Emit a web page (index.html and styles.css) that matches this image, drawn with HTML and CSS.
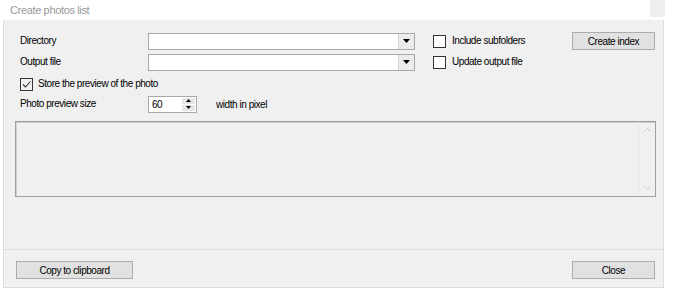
FILE: index.html
```html
<!DOCTYPE html>
<html>
<head>
  <title>Create photos list</title>
  <link rel="stylesheet" href="styles.css">
</head>
<body>
  <div class="titlebar">
    <span class="title">Create photos list</span>
    <span class="sysbox"></span>
  </div>

  <div class="dialog">
    <div class="grid">
      <label class="lbl">Directory</label>
      <div class="combo">
        <span class="combo-text"></span>
        <span class="combo-btn"><svg width="7" height="4" viewBox="0 0 7 4"><path d="M0 0h7L3.5 4z" fill="#000"/></svg></span>
      </div>
      <span></span>
      <label class="check"><span class="box"></span>Include subfolders</label>
      <button class="btn">Create index</button>

      <label class="lbl">Output file</label>
      <div class="combo">
        <span class="combo-text"></span>
        <span class="combo-btn"><svg width="7" height="4" viewBox="0 0 7 4"><path d="M0 0h7L3.5 4z" fill="#000"/></svg></span>
      </div>
      <span></span>
      <label class="check"><span class="box"></span>Update output file</label>
      <span></span>
    </div>

    <label class="check store"><span class="box"><svg width="11" height="11" viewBox="0 0 11 11"><path d="M2 5.5l2.5 2.5L9.5 2.5" fill="none" stroke="#333" stroke-width="1.1"/></svg></span>Store the preview of the photo</label>

    <div class="size-row">
      <span class="lbl">Photo preview size</span>
      <div class="spin">
        <span class="spin-text">60</span>
        <span class="spin-btns">
          <span class="spin-b"><svg width="5" height="3" viewBox="0 0 5 3"><path d="M0 3h5L2.5 0z" fill="#000"/></svg></span>
          <span class="spin-b"><svg width="5" height="3" viewBox="0 0 5 3"><path d="M0 0h5L2.5 3z" fill="#000"/></svg></span>
        </span>
      </div>
      <span class="unit">width in pixel</span>
    </div>

    <div class="output">
      <div class="output-body"></div>
      <div class="vscroll">
        <svg width="7" height="4" viewBox="0 0 7 4"><path d="M0.5 3.5L3.5 0.5L6.5 3.5" fill="none" stroke="#c4c4c4"/></svg>
        <svg width="7" height="4" viewBox="0 0 7 4"><path d="M0.5 0.5L3.5 3.5L6.5 0.5" fill="none" stroke="#c4c4c4"/></svg>
      </div>
    </div>

    <div class="footer">
      <button class="btn wide">Copy to clipboard</button>
      <button class="btn">Close</button>
    </div>
  </div>
</body>
</html>
```

FILE: styles.css
```css
body { margin: 0; background: #fff; font-family: "Liberation Sans", Arial, sans-serif; font-size: 10px; letter-spacing: -0.45px; color: #000; width: 677px; height: 290px; overflow: hidden; }
.titlebar { height: 20px; display: flex; align-items: flex-start; justify-content: space-between; }
.title { font-size: 11px; letter-spacing: -0.35px; color: #999; padding: 3px 0 0 10px; line-height: 14px; }
.sysbox { width: 15px; height: 17px; background: #eeeeee; margin-right: 12px; }

.dialog { margin-left: 3px; width: 659px; height: 267px; background: #f0f0f0; border: 1px solid #dcdcdc; border-top: none; display: flex; flex-direction: column; box-sizing: content-box; }

.grid { display: grid; grid-template-columns: 128px 267px 18px 139px 83px; grid-auto-rows: 18px; row-gap: 3px; padding: 12px 0 0 16px; align-items: center; }
.lbl { line-height: 12px; }
.combo { height: 17px; box-sizing: border-box; border: 1px solid #a9a9a9; background: #fff; display: flex; }
.combo-text { flex: 1; }
.combo-btn { width: 15px; border-left: 1px solid #d4d4d4; background: #ececec; display: flex; align-items: center; justify-content: center; }

.check { display: flex; align-items: center; gap: 6px; line-height: 12px; }
.box { width: 13px; height: 13px; box-sizing: border-box; border: 1px solid #333; background: #fff; display: flex; align-items: center; justify-content: center; }
.store { margin: 6px 0 0 16px; height: 14px; gap: 5px; }
.store .box { background: #f0f0f0; }

.btn { height: 18px; padding: 0; border: 1px solid #adadad; background: #e1e1e1; font: inherit; letter-spacing: inherit; color: #000; width: 83px; }
.btn.wide { width: 117px; }

.size-row { display: flex; align-items: center; height: 18px; margin: 4px 0 0 16px; }
.size-row .lbl { width: 128px; }
.spin { width: 49px; height: 17px; box-sizing: border-box; border: 1px solid #a9a9a9; background: #fff; display: flex; }
.spin-text { flex: 1; padding-left: 3px; line-height: 15px; }
.spin-btns { width: 13px; display: flex; flex-direction: column; padding: 1px 1px 1px 0; gap: 1px; }
.spin-b { flex: 1; background: #e6e6e6; display: flex; align-items: center; justify-content: center; }
.unit { margin-left: 19px; }

.output { margin: 8px 0 0 11px; width: 641px; height: 76px; box-sizing: border-box; border: 1px solid #a0a0a0; border-top-color: #9a9a9a; box-shadow: inset 1px 1px 0 #cfcfcf; display: flex; }
.output-body { flex: 1; }
.vscroll { width: 16px; border-left: 1px solid #e6e6e6; display: flex; flex-direction: column; justify-content: space-between; align-items: center; padding: 6px 0 6px; }

.footer { margin-top: auto; border-top: 1px solid #dcdcdc; height: 38px; box-sizing: border-box; display: flex; justify-content: space-between; align-items: flex-start; padding: 11px 8px 0 12px; }
```
